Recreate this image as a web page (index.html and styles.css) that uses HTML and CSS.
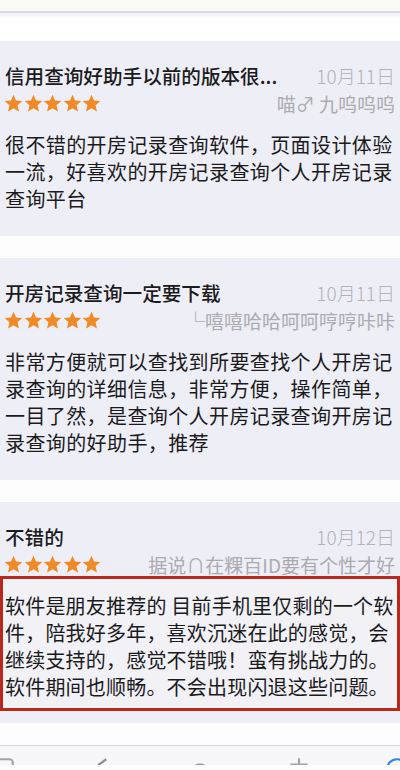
FILE: index.html
```html
<!doctype html>
<html lang="zh-CN">
  <head>
    <meta charset="utf-8"/>
    <title>评分及评论</title>
    <link rel="stylesheet" href="styles.css">
  </head>
  <body>
    <div class="top-strip"></div>
    <div class="top-space"></div>

    <div class="review">
      <div class="review-head">
        <div class="review-title">信用查询好助手以前的版本很...</div>
        <div class="review-date">10月11日</div>
      </div>
      <div class="review-meta">
        <div class="stars">
          <svg viewBox="0 0 24 24"><polygon points="12,1 15.2,8.2 23,8.9 17.1,14.1 18.9,22 12,17.9 5.1,22 6.9,14.1 1,8.9 8.8,8.2"/></svg>
          <svg viewBox="0 0 24 24"><polygon points="12,1 15.2,8.2 23,8.9 17.1,14.1 18.9,22 12,17.9 5.1,22 6.9,14.1 1,8.9 8.8,8.2"/></svg>
          <svg viewBox="0 0 24 24"><polygon points="12,1 15.2,8.2 23,8.9 17.1,14.1 18.9,22 12,17.9 5.1,22 6.9,14.1 1,8.9 8.8,8.2"/></svg>
          <svg viewBox="0 0 24 24"><polygon points="12,1 15.2,8.2 23,8.9 17.1,14.1 18.9,22 12,17.9 5.1,22 6.9,14.1 1,8.9 8.8,8.2"/></svg>
          <svg viewBox="0 0 24 24"><polygon points="12,1 15.2,8.2 23,8.9 17.1,14.1 18.9,22 12,17.9 5.1,22 6.9,14.1 1,8.9 8.8,8.2"/></svg>
        </div>
        <div class="review-author">喵♂ 九呜呜呜</div>
      </div>
      <div class="review-body">很不错的开房记录查询软件，页面设计体验一流，好喜欢的开房记录查询个人开房记录查询平台</div>
    </div>

    <div class="review">
      <div class="review-head">
        <div class="review-title">开房记录查询一定要下载</div>
        <div class="review-date">10月11日</div>
      </div>
      <div class="review-meta">
        <div class="stars">
          <svg viewBox="0 0 24 24"><polygon points="12,1 15.2,8.2 23,8.9 17.1,14.1 18.9,22 12,17.9 5.1,22 6.9,14.1 1,8.9 8.8,8.2"/></svg>
          <svg viewBox="0 0 24 24"><polygon points="12,1 15.2,8.2 23,8.9 17.1,14.1 18.9,22 12,17.9 5.1,22 6.9,14.1 1,8.9 8.8,8.2"/></svg>
          <svg viewBox="0 0 24 24"><polygon points="12,1 15.2,8.2 23,8.9 17.1,14.1 18.9,22 12,17.9 5.1,22 6.9,14.1 1,8.9 8.8,8.2"/></svg>
          <svg viewBox="0 0 24 24"><polygon points="12,1 15.2,8.2 23,8.9 17.1,14.1 18.9,22 12,17.9 5.1,22 6.9,14.1 1,8.9 8.8,8.2"/></svg>
          <svg viewBox="0 0 24 24"><polygon points="12,1 15.2,8.2 23,8.9 17.1,14.1 18.9,22 12,17.9 5.1,22 6.9,14.1 1,8.9 8.8,8.2"/></svg>
        </div>
        <div class="review-author">└嘻嘻哈哈呵呵哼哼咔咔</div>
      </div>
      <div class="review-body">非常方便就可以查找到所要查找个人开房记录查询的详细信息，非常方便，操作简单，一目了然，是查询个人开房记录查询开房记录查询的好助手，推荐</div>
    </div>

    <div class="review">
      <div class="review-head">
        <div class="review-title">不错的</div>
        <div class="review-date">10月12日</div>
      </div>
      <div class="review-meta">
        <div class="stars">
          <svg viewBox="0 0 24 24"><polygon points="12,1 15.2,8.2 23,8.9 17.1,14.1 18.9,22 12,17.9 5.1,22 6.9,14.1 1,8.9 8.8,8.2"/></svg>
          <svg viewBox="0 0 24 24"><polygon points="12,1 15.2,8.2 23,8.9 17.1,14.1 18.9,22 12,17.9 5.1,22 6.9,14.1 1,8.9 8.8,8.2"/></svg>
          <svg viewBox="0 0 24 24"><polygon points="12,1 15.2,8.2 23,8.9 17.1,14.1 18.9,22 12,17.9 5.1,22 6.9,14.1 1,8.9 8.8,8.2"/></svg>
          <svg viewBox="0 0 24 24"><polygon points="12,1 15.2,8.2 23,8.9 17.1,14.1 18.9,22 12,17.9 5.1,22 6.9,14.1 1,8.9 8.8,8.2"/></svg>
          <svg viewBox="0 0 24 24"><polygon points="12,1 15.2,8.2 23,8.9 17.1,14.1 18.9,22 12,17.9 5.1,22 6.9,14.1 1,8.9 8.8,8.2"/></svg>
        </div>
        <div class="review-author">据说∩在粿百ID要有个性才好</div>
      </div>
      <div class="review-body highlighted">软件是朋友推荐的 目前手机里仅剩的一个软件，陪我好多年，喜欢沉迷在此的感觉，会继续支持的，感觉不错哦！蛮有挑战力的。软件期间也顺畅。不会出现闪退这些问题。</div>
    </div>

    <div class="tab-bar">
      <svg class="tab-icon" viewBox="0 0 24 24"><rect x="3" y="3" width="18" height="18" rx="3"/></svg>
      <svg class="tab-icon dark" viewBox="0 0 24 24"><path d="M16 3 L9 8 L9 20"/></svg>
      <svg class="tab-icon filled" viewBox="0 0 24 24"><path d="M2 12 Q12 2 22 12 Z"/></svg>
      <svg class="tab-icon" viewBox="0 0 24 24"><path d="M12 2 V21 M4 8 H20"/></svg>
      <svg class="tab-icon blue" viewBox="0 0 24 24"><circle cx="12" cy="12" r="9"/></svg>
    </div>
  </body>
</html>
```

FILE: styles.css
```css
* {
  box-sizing: border-box;
}
body {
  margin: 0;
  background-color: #fdfdfd;
  font-family: "Noto Sans CJK SC", "Noto Sans", sans-serif;
  color: #1b1b1d;
  width: 400px;
  height: 770px;
  overflow: hidden;
}
.top-strip {
  height: 13px;
  background-color: #fbfbf6;
  border-bottom: 2px solid #d9d9e4;
}
.top-space {
  height: 28px;
  background: linear-gradient(#f1f1f8, #fefefe 6px);
}
.review {
  background-color: #eeeef6;
  padding: 20px 5px 24px 5px;
  margin-bottom: 22px;
}
.review-head {
  display: flex;
  justify-content: space-between;
  align-items: center;
  height: 28px;
}
.review-title {
  font-size: 19.6px;
  font-weight: 500;
  white-space: nowrap;
}
.review-date {
  font-size: 19px;
  color: #b3b3b8;
  font-weight: 300;
}
.review-meta {
  display: flex;
  justify-content: space-between;
  align-items: center;
  height: 28px;
}
.stars {
  display: flex;
  gap: 0.5px;
  margin-left: -1px;
}
.stars svg {
  width: 19px;
  height: 19px;
  fill: #f08a26;
}
.review-author {
  font-size: 19px;
  color: #ababb0;
  white-space: nowrap;
}
.review-body {
  margin-top: 14px;
  font-size: 20px;
  letter-spacing: 0.4px;
  line-height: 27px;
}
.review-body.highlighted {
  margin: -2px -5px -12px -5px;
  padding: 13px 0 8px 2px;
  border: 3px solid #b8281c;
  background-color: #f1f1f6;
  letter-spacing: 0.2px;
}
.tab-bar {
  margin: 5px -10px 0 -10px;
  border-top: 1px solid #d6d6de;
  background-color: #f7f7f9;
  height: 20px;
  display: flex;
  justify-content: space-between;
  padding-top: 10px;
  overflow: hidden;
}
.tab-icon {
  flex: none;
  width: 26px;
  height: 26px;
  fill: none;
  stroke: #a3a3a8;
  stroke-width: 2;
}
.tab-icon.dark {
  stroke: #8e8e93;
}
.tab-icon.filled {
  fill: #9a9aa0;
  stroke: none;
}
.tab-icon.blue {
  stroke: #2f86e8;
}
```
